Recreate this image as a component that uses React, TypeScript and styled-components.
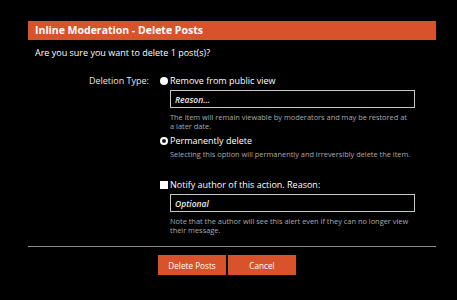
import React from "react";
import styled, { createGlobalStyle } from "styled-components";

const Global = createGlobalStyle`
  html, body { margin: 0; padding: 0; background: #000; }
  body { font-family: "Open Sans", "Liberation Sans", sans-serif; color: #fff; }
  * { box-sizing: border-box; }
`;

const ACCENT = "#d8532b";

const Page = styled.div`
  width: 457px;
  height: 300px;
  padding: 21px 21px 0 28px;
`;

const Header = styled.h2`
  margin: 0;
  height: 19px;
  line-height: 19px;
  padding-left: 7px;
  background: ${ACCENT};
  font-size: 10.5px;
  font-weight: 700;
  color: #fff;
`;

const Intro = styled.p`
  margin: 7px 0 0;
  padding-left: 7px;
  font-size: 9px;
  line-height: 12px;
`;

const Form = styled.div`
  display: grid;
  grid-template-columns: 121px 1fr;
  column-gap: 11px;
  margin-top: 16px;
`;

const RowLabel = styled.div`
  text-align: right;
  font-size: 9px;
  line-height: 12px;
  color: #e6e6e6;
`;

const Controls = styled.div`
  display: flex;
  flex-direction: column;
  width: 256px;
`;

const Option = styled.label<{ $gap?: number }>`
  display: flex;
  align-items: center;
  gap: 2px;
  height: 12px;
  margin-top: ${(p) => p.$gap ?? 0}px;
  font-size: 9px;
  line-height: 12px;
  color: #fff;
`;

const Radio = styled.input.attrs({ type: "radio" })`
  appearance: none;
  margin: 0;
  width: 8px;
  height: 8px;
  border-radius: 50%;
  background: #fff;
  flex: none;
  &:checked {
    background: #1a1a1a;
    border: 2.2px solid #fff;
  }
`;

const Check = styled.input.attrs({ type: "checkbox" })`
  appearance: none;
  margin: 0;
  width: 8px;
  height: 8px;
  background: #fff;
  flex: none;
`;

const NestedBlock = styled.div`
  padding-left: 10px;
  display: flex;
  flex-direction: column;
`;

const TextBox = styled.input`
  margin-top: 3px;
  width: 245px;
  height: 18px;
  padding: 0 4px;
  background: #000;
  border: 1px solid #c8c8c8;
  border-radius: 0;
  font-family: inherit;
  font-size: 8.5px;
  font-style: italic;
  font-weight: 600;
  color: #fff;
  outline: none;
  &::placeholder {
    color: #eaeaea;
    opacity: 1;
  }
`;

const Hint = styled.p<{ $gap: number }>`
  margin: ${(p) => p.$gap}px 0 0;
  width: 241px;
  font-size: 7.4px;
  line-height: 9px;
  color: #a9a9a9;
`;

const Divider = styled.hr`
  margin: 11px 0 0;
  border: none;
  border-top: 1.5px solid #8a8a8a;
  height: 0;
`;

const ButtonBar = styled.div`
  display: flex;
  gap: 2px;
  margin-top: 8px;
  padding-left: 130px;
`;

const Button = styled.button`
  width: 68px;
  height: 20px;
  padding: 0;
  border: none;
  border-radius: 0;
  background: ${ACCENT};
  color: #fff;
  font-family: inherit;
  font-size: 8.2px;
  cursor: pointer;
`;

export default function App() {
  return (
    <>
      <Global />
      <Page>
        <Header>Inline Moderation - Delete Posts</Header>
        <Intro>Are you sure you want to delete 1 post(s)?</Intro>
        <Form>
          <RowLabel>Deletion Type:</RowLabel>
          <Controls>
            <Option>
              <Radio name="hard_delete" value="0" />
              Remove from public view
            </Option>
            <NestedBlock>
              <TextBox placeholder="Reason..." />
              <Hint $gap={5}>
                The item will remain viewable by moderators and may be restored at a later date.
              </Hint>
            </NestedBlock>
            <Option $gap={4}>
              <Radio name="hard_delete" value="1" defaultChecked />
              Permanently delete
            </Option>
            <NestedBlock>
              <Hint $gap={2.5}>
                Selecting this option will permanently and irreversibly delete the item.
              </Hint>
            </NestedBlock>
            <Option $gap={20.5}>
              <Check />
              Notify author of this action. Reason:
            </Option>
            <NestedBlock>
              <TextBox placeholder="Optional" />
              <Hint $gap={5}>
                Note that the author will see this alert even if they can no longer view their message.
              </Hint>
            </NestedBlock>
          </Controls>
        </Form>
        <Divider />
        <ButtonBar>
          <Button>Delete Posts</Button>
          <Button>Cancel</Button>
        </ButtonBar>
      </Page>
    </>
  );
}
